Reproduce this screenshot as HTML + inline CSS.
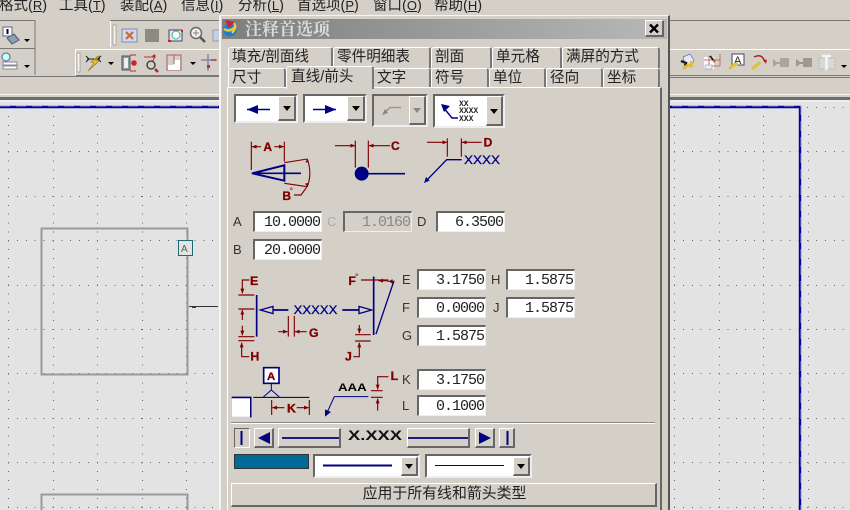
<!DOCTYPE html>
<html><head><meta charset="utf-8">
<style>
html,body{margin:0;padding:0;background:#d4d0c8}
#r{position:relative;width:850px;height:510px;overflow:hidden;background:#d4d0c8;font-family:"Liberation Sans","Noto Sans CJK SC",sans-serif;color:#111}
#r div{position:absolute;box-sizing:border-box}
.m{top:-3px;font-size:14.5px;line-height:18px;white-space:nowrap;color:#222}
.m u{font-size:13px}
.tab{background:#d4d0c8;border-top:1px solid #fff;border-left:1px solid #fff;border-right:2px solid #777;border-radius:3px 3px 0 0;font-size:14.6px;line-height:18px;padding-left:3px;white-space:nowrap;color:#222}
.f{background:#fff;border-top:2px solid #666;border-left:2px solid #666;border-right:1px solid #eee;border-bottom:1px solid #eee;font:15px/19px "Liberation Mono",monospace;letter-spacing:-1px;text-align:right;color:#222;padding-right:1px}
.f.d{background:#d4d0c8;color:#888}
.l{font-size:13px;line-height:16px;color:#333}
.cb{background:#fff;border-top:2px solid #666;border-left:2px solid #666;border-right:2px solid #eee;border-bottom:2px solid #eee}
.cb.d{background:#d4d0c8}
.dd{background:#d4d0c8;border-top:1px solid #fff;border-left:1px solid #fff;border-right:2px solid #666;border-bottom:2px solid #666}
.dd:after{content:"";position:absolute;left:50%;top:50%;margin:-2px 0 0 -4px;border:4px solid transparent;border-top:5px solid #000;border-bottom:0}
.dd.g:after{border-top-color:#888}
.b{background:#d4d0c8;border-top:1px solid #fff;border-left:1px solid #fff;border-right:2px solid #666;border-bottom:2px solid #666}
</style></head><body>
<div id="r">
<svg style="position:absolute;left:0;top:0" width="850" height="510">
<rect x="0" y="94" width="850" height="1" fill="#f4f3f0"/>
<rect x="0" y="97" width="850" height="3" fill="#6e6e6e"/>
<rect x="0" y="100" width="850" height="410" fill="#e3e3e3"/>
<rect x="0" y="100" width="850" height="2" fill="#ececec"/>
<g stroke="#5c6490" stroke-width="1" stroke-dasharray="1 7.88" shape-rendering="crispEdges">
<path d="M8 151.500H850M8 196.500H850M8 240.500H850M8 285.500H850M8 329.500H850M8 373.500H850M8 418.500H850M8 462.500H850M8 507.500H850M807 107.500H850"/>
<path d="M8.500 116V510M53.500 116V510M97.500 116V510M142.500 116V510M186.500 116V510M674.500 116V510M719.500 116V510M763.500 116V510M808.500 116V510"/>
</g>
<path d="M0 107H800V510" fill="none" stroke="#0000a8" stroke-width="2.400"/>
<path d="M0 106H801V510" fill="none" stroke="#9098c8" stroke-width="1" stroke-dasharray="10 6"/>
<rect x="41.500" y="228.500" width="146" height="146" fill="none" stroke="#999" stroke-width="2"/>
<rect x="41.500" y="494.500" width="146" height="40" fill="none" stroke="#999" stroke-width="2"/>
<rect x="178.500" y="240.500" width="14" height="15" fill="#e3e3e3" stroke="#1d6a70"/>
<text x="181" y="252" font-size="10" fill="#4a6a3a" font-family="Liberation Sans">A</text>
<path d="M189 306.500H218" stroke="#333"/><path d="M192 307.500H196" stroke="#333"/>

<!-- toolbars -->
<path d="M0 20.500H35V48.500M0 48.500H35V75" fill="none" stroke="#777"/>
<path d="M0 76.500H220" stroke="#777"/>
<path d="M110.500 21V47M75.500 49.500H220M75.500 49V75" fill="none" stroke="#fff"/>
<path d="M110 20.500H220" stroke="#777"/>
<path d="M76 75.500H220M669 20.500H850M669 75.500H850M669 77.500H850" stroke="#777"/>
<path d="M669 49.500H850" stroke="#fff"/>
<rect x="113" y="25" width="3" height="20" fill="#f4f3f0" stroke="#888" stroke-width=".6"/>
<rect x="77" y="53" width="3" height="19" fill="#f4f3f0" stroke="#888" stroke-width=".6"/>
<!-- left toolbar icons -->
<rect x="3" y="27" width="9" height="9" fill="#fff" stroke="#668"/><rect x="6.500" y="29" width="2" height="5" fill="#004"/>
<path d="M7 38L14 34L19 40L12 44Z" fill="#88a0b8" stroke="#556"/>
<path d="M24 39h6l-3 3z" fill="#000"/>
<circle cx="6" cy="57" r="4" fill="#cfe" stroke="#46a"/>
<path d="M3 62h14v4h-14zM3 65h14v4h-14z" fill="#fff" stroke="#889"/>
<path d="M24 65h6l-3 3z" fill="#000"/>
<rect x="122" y="29" width="15" height="13" fill="#cdd8f2" stroke="#88a"/><path d="M126 32l7 7M133 32l-7 7" stroke="#d06a20" stroke-width="2.200"/>
<rect x="145" y="29" width="14" height="13" fill="#8d8a7e"/>
<rect x="169" y="30" width="13" height="11" fill="#dfe9fb" stroke="#446"/><circle cx="176" cy="35" r="4" fill="#fff" stroke="#4a8"/><path d="M168 41h3M182 30v2" stroke="#d02020" stroke-width="2"/>
<circle cx="196" cy="33" r="5.500" fill="#eee" stroke="#666" stroke-width="1.400"/><path d="M200 37l5 5" stroke="#555" stroke-width="2.500"/><path d="M193 33h6M196 30v6" stroke="#888"/>
<rect x="213" y="30" width="7" height="11" fill="#c5d0e8" stroke="#99a"/>
<!-- second row -->
<path d="M86 56l3 3-3 3M101 56l-3 3 3 3M87 59H100" stroke="#222" fill="none"/><path d="M98 56l-7 6 3 1-6 8 11-10-4-1 5-4z" fill="#e8c830" stroke="#887020" stroke-width=".6"/>
<path d="M108 62h6l-3 3z" fill="#000"/>
<path d="M122 56h8v14h-8z" fill="#8a9aa0" stroke="#555"/><path d="M124 58h4v10h-4z" fill="#eee"/><circle cx="134" cy="63" r="2.800" fill="#d02030"/><path d="M130 55h6M130 71h6" stroke="#d02030"/>
<path d="M144 57H155L152 62" fill="none" stroke="#c03030"/><circle cx="151" cy="65" r="4" fill="none" stroke="#333" stroke-width="1.300"/><path d="M155 69l3 3M153 57l2-2" stroke="#c02030" stroke-width="2.500"/>
<rect x="167" y="55" width="14" height="15" fill="#d4d0c8" stroke="#b06060"/><path d="M168 65h6v-5h6v10h-12z" fill="#fff"/><path d="M174 55v9" stroke="#b06060"/>
<path d="M190 62h6l-3 3z" fill="#000"/>
<path d="M201 60H217" stroke="#8884a8" stroke-width="1.500"/><path d="M208 54V71" stroke="#8884a8" stroke-width="1.500"/><rect x="207" y="65" width="3" height="3" fill="#c03030"/><path d="M211 60h5" stroke="#c04040" stroke-width="1.500"/>
<!-- right toolbar icons -->
<path d="M683 57l7-3 4 6-2 5-7-1z" fill="#e4e8f8" stroke="#66a" stroke-width=".7"/><path d="M681 61l5 2-1 3" fill="none" stroke="#222" stroke-width="2.400"/><path d="M683 69l5-4 3 1 1-3-2-1" fill="none" stroke="#e0c030" stroke-width="3"/>
<rect x="704" y="57" width="10" height="12" fill="#fff"/><path d="M709 56V69M704 60H720M720 54V66M709 66H720" stroke="#c07070"/><path d="M710 56l5 6" stroke="#222" stroke-width="1.800"/><path d="M713 60l2 2" stroke="#d06020" stroke-width="2"/><rect x="705" y="65" width="7" height="4" fill="#eee" stroke="#999" stroke-width=".6"/>
<rect x="732" y="54" width="12" height="11" fill="#fff" stroke="#446"/><text x="734" y="64" font-size="11" fill="#222" font-family="Liberation Sans">A</text><path d="M729 69l6-5h3" fill="none" stroke="#e0c030" stroke-width="3"/>
<path d="M752 69l6-5 2-2" fill="none" stroke="#e0c030" stroke-width="3"/><path d="M754 57q6-3 9 1l2 4" fill="none" stroke="#a82020" stroke-width="1.500"/><path d="M763 59l4 1-1 4z" fill="#c02020"/>
<path d="M773 59l4 3h3v-4h9v9h-9v-3h-3l-4 3z" fill="#a8a69c"/>
<path d="M796 59l4 3h3v-4h9v9h-9v-3h-3l-4 3z" fill="#9c9a8c"/>
<rect x="819" y="58" width="16" height="11" fill="#d8d8d8" stroke="#aaa" stroke-dasharray="1 1"/><path d="M822 56h9M826.500 56v14" stroke="#f4f4f4" stroke-width="2.500"/>
<path d="M841 65h6l-3 3z" fill="#000"/>
</svg>

<!-- menu -->
<div class="m" style="left:-1px">格式(<u>R</u>)</div>
<div class="m" style="left:59px">工具(<u>T</u>)</div>
<div class="m" style="left:120px">装配(<u>A</u>)</div>
<div class="m" style="left:181px">信息(<u>I</u>)</div>
<div class="m" style="left:238px">分析(<u>L</u>)</div>
<div class="m" style="left:297px">首选项(<u>P</u>)</div>
<div class="m" style="left:373px">窗口(<u>O</u>)</div>
<div class="m" style="left:434px">帮助(<u>H</u>)</div>

<!-- dialog -->
<div style="left:219px;top:15px;width:451px;height:495px;background:#d4d0c8;border-top:1px solid #f4f4f4;border-left:2px solid #f4f4f4;border-right:2px solid #555"></div>
<div style="left:222px;top:19px;width:445px;height:20px;background:linear-gradient(90deg,#7e7e7e,#b8b8b8)"></div>
<svg style="position:absolute;left:222px;top:19px" width="20" height="20">
<ellipse cx="8" cy="11" rx="6.500" ry="6.500" fill="#1680d0"/><path d="M2 10q6 4 12-3" stroke="#e8c830" stroke-width="2.500" fill="none"/><path d="M3 1L13 3L7 9Z" fill="#d02040"/><path d="M12 4q3 5-2 10" stroke="#f0d040" stroke-width="2" fill="none"/>
</svg>
<div style="left:245px;top:20px;font-size:17px;line-height:19px;font-weight:700;color:#dcdcdc;font-family:'Liberation Serif','Noto Serif CJK SC',serif;white-space:nowrap">注释首选项</div>
<div class="b" style="left:645px;top:20px;width:19px;height:17px"></div>
<svg style="position:absolute;left:645px;top:20px" width="19" height="17"><path d="M5 4.500L13 12.500M13 4.500L5 12.500" stroke="#000" stroke-width="2.400"/></svg>

<!-- tabs -->
<div class="tab" style="left:228px;top:47px;width:105px;height:21px">填充/剖面线</div>
<div class="tab" style="left:333px;top:47px;width:98px;height:21px">零件明细表</div>
<div class="tab" style="left:431px;top:47px;width:61px;height:21px">剖面</div>
<div class="tab" style="left:492px;top:47px;width:70px;height:21px">单元格</div>
<div class="tab" style="left:562px;top:47px;width:98px;height:21px">满屏的方式</div>
<div style="left:227px;top:87px;width:435px;height:423px;background:#d4d0c8;border-top:1px solid #fff;border-left:1px solid #fff;border-right:2px solid #666"></div>
<div class="tab" style="left:228px;top:68px;width:58px;height:19px">尺寸</div>
<div class="tab" style="left:373px;top:68px;width:58px;height:19px">文字</div>
<div class="tab" style="left:431px;top:68px;width:58px;height:19px">符号</div>
<div class="tab" style="left:489px;top:68px;width:57px;height:19px">单位</div>
<div class="tab" style="left:546px;top:68px;width:57px;height:19px">径向</div>
<div class="tab" style="left:603px;top:68px;width:57px;height:19px">坐标</div>
<div class="tab" style="left:286px;top:66px;width:88px;height:23px;line-height:20px;padding-left:4px;z-index:2">直线/前头</div>

<!-- combos -->
<div class="cb" style="left:234px;top:94px;width:64px;height:29px"></div><div class="dd" style="left:278px;top:96px;width:18px;height:25px"></div>
<div class="cb" style="left:303px;top:94px;width:64px;height:29px"></div><div class="dd" style="left:347px;top:96px;width:18px;height:25px"></div>
<div class="cb d" style="left:372px;top:94px;width:56px;height:33px"></div><div class="dd g" style="left:409px;top:96px;width:17px;height:29px"></div>
<div class="cb" style="left:433px;top:94px;width:72px;height:34px"></div><div class="dd" style="left:486px;top:96px;width:17px;height:30px"></div>

<!-- fields -->
<div class="l" style="left:233px;top:214px">A</div>
<div class="f" style="left:253px;top:211px;width:69px;height:21px">10.0000</div>
<div class="l" style="left:327px;top:214px;color:#aaa">C</div>
<div class="f d" style="left:343px;top:211px;width:69px;height:21px">1.0160</div>
<div class="l" style="left:417px;top:214px">D</div>
<div class="f" style="left:436px;top:211px;width:69px;height:21px">6.3500</div>
<div class="l" style="left:233px;top:242px">B</div>
<div class="f" style="left:253px;top:239px;width:69px;height:21px">20.0000</div>
<div class="l" style="left:402px;top:272px">E</div>
<div class="f" style="left:417px;top:269px;width:69px;height:21px">3.1750</div>
<div class="l" style="left:491px;top:272px">H</div>
<div class="f" style="left:506px;top:269px;width:69px;height:21px">1.5875</div>
<div class="l" style="left:402px;top:300px">F</div>
<div class="f" style="left:417px;top:297px;width:69px;height:21px">0.0000</div>
<div class="l" style="left:493px;top:300px">J</div>
<div class="f" style="left:506px;top:297px;width:69px;height:21px">1.5875</div>
<div class="l" style="left:402px;top:328px">G</div>
<div class="f" style="left:417px;top:325px;width:69px;height:21px">1.5875</div>
<div class="l" style="left:402px;top:372px">K</div>
<div class="f" style="left:417px;top:369px;width:69px;height:21px">3.1750</div>
<div class="l" style="left:402px;top:398px">L</div>
<div class="f" style="left:417px;top:395px;width:69px;height:21px">0.1000</div>

<!-- bottom controls -->
<div style="left:231px;top:422px;width:424px;height:2px;background:#888;border-bottom:1px solid #fff"></div>
<div class="b" style="left:234px;top:428px;width:16px;height:20px;border:1px solid;border-color:#666 #fff #fff #666"></div>
<div class="b" style="left:254px;top:428px;width:20px;height:20px"></div>
<div class="b" style="left:278px;top:428px;width:63px;height:20px"></div>
<div class="b" style="left:407px;top:428px;width:63px;height:20px"></div>
<div class="b" style="left:475px;top:428px;width:20px;height:20px"></div>
<div class="b" style="left:499px;top:428px;width:16px;height:20px"></div>
<div style="left:234px;top:454px;width:75px;height:15px;background:#006a9a;border:1px solid #333"></div>
<div class="cb" style="left:313px;top:454px;width:107px;height:24px"></div><div class="dd" style="left:401px;top:457px;width:17px;height:19px"></div>
<div class="cb" style="left:425px;top:454px;width:107px;height:24px"></div><div class="dd" style="left:513px;top:457px;width:17px;height:19px"></div>
<div class="b" style="left:231px;top:483px;width:426px;height:24px;text-align:center;font-size:14.9px;line-height:21px;color:#222;padding-left:2px">应用于所有线和箭头类型</div>

<svg style="position:absolute;left:0;top:0;z-index:3;pointer-events:none" width="850" height="510">
<defs>
<marker id="a" markerUnits="userSpaceOnUse" markerWidth="16" markerHeight="14" refX="14" refY="7" orient="auto"><path d="M0 1L15 7L0 13Z" fill="#800000"/></marker>
</defs>
<!-- combo contents -->
<path d="M247 109.500H270" stroke="#000080" stroke-width="1.400"/><path d="M247 109.500l11-4.500v9z" fill="#000080"/>
<path d="M313 109.500H336" stroke="#000080" stroke-width="1.400"/><path d="M336 109.500l-11-4.500v9z" fill="#000080"/>
<path d="M383 114L390 107.500H401" fill="none" stroke="#999" stroke-width="1.600"/><path d="M382 115l3-6 3 4z" fill="#888"/>
<path d="M443 107L452 118H458" fill="none" stroke="#000080" stroke-width="1.400"/><path d="M441 104l9 2-6 6z" fill="#000080"/>
<g font-size="8" font-weight="700" fill="#222" font-family="Liberation Mono">
<text x="459" y="106">XX</text>
<text x="459" y="113">XXXX</text>
<text x="459" y="121">XXX</text>
</g>

<!-- upper diagrams, zoom coords -->
<g transform="translate(225,90) scale(.33333)" fill="none" font-family="Liberation Sans" font-weight="700">
<g stroke="#800000" stroke-width="3.400">
<path d="M79 155V240M178 155V215M391 152V233M430 152V233M667 145V200M709 145V200"/>
<path d="M108 170H81" marker-end="url(#a)"/><path d="M148 170H176" marker-end="url(#a)"/>
<path d="M330 167H390" marker-end="url(#a)"/><path d="M495 167H432" marker-end="url(#a)"/>
<path d="M606 157H666" marker-end="url(#a)"/><path d="M770 157H711" marker-end="url(#a)"/>
<path d="M178 218L247 207M178 280L247 290"/>
<path d="M247 207Q262 250 247 290"/>
<path d="M207 315H228L245 292"/>
</g>
<path d="M247 207l-6 10 10 0zM247 290l-7-9 10-2z" fill="#800000"/>
<g fill="#800000" stroke="#800000" stroke-width="1" font-size="36">
<text x="115" y="183">A</text>
<text x="172" y="330">B</text>
<text x="498" y="180">C</text>
<text x="776" y="170">D</text>
</g>
<text x="193" y="312" font-size="28" fill="#800000" font-weight="400">°</text>
<g stroke="#000080">
<path d="M82 250L178 226V272Z" stroke-width="6"/>
<path d="M80 250H228" stroke-width="5"/>
<path d="M430 251H540" stroke-width="5"/>
<path d="M710 209H665L604 272" stroke-width="4"/>
</g>
<path d="M597 279l6-18 11 11z" fill="#000080"/>
<circle cx="410" cy="251" r="21" fill="#000080"/>
<text x="717" y="222" font-size="36" fill="#000080" stroke="#000080" stroke-width=".8" font-weight="400" textLength="108" lengthAdjust="spacingAndGlyphs">XXXX</text>
</g>

<!-- lower diagrams -->
<g transform="translate(225,260) scale(.33333)" fill="none" font-family="Liberation Sans" font-weight="700">
<g stroke="#800000" stroke-width="3.400">
<path d="M73 60H52V100" marker-end="url(#a)"/>
<path d="M40 105H88M40 147H88M40 230H88M40 242H88"/>
<path d="M52 180V150" marker-end="url(#a)"/>
<path d="M52 197V226" marker-end="url(#a)"/>
<path d="M73 290H50V248" marker-end="url(#a)"/>
<path d="M190 168V230M208 168V230"/>
<path d="M160 215H188" marker-end="url(#a)"/>
<path d="M245 215H210" marker-end="url(#a)"/>
<path d="M408 60H490"/>
<path d="M480 62H460" marker-end="url(#a)"/>
<path d="M480 62Q498 62 505 72" marker-end="url(#a)"/>
<path d="M403 195V220" marker-end="url(#a)"/>
<path d="M390 224H437M390 243H437"/>
<path d="M385 290H403V248" marker-end="url(#a)"/>
<path d="M140 420V465M253 420V465"/>
<path d="M178 443H142" marker-end="url(#a)"/>
<path d="M215 443H251" marker-end="url(#a)"/>
<path d="M490 350H458V388" marker-end="url(#a)"/>
<path d="M438 392H473M438 412H473"/>
<path d="M458 452V416" marker-end="url(#a)"/>
</g>
<g stroke="#000080">
<path d="M95 105V230M446 50V225" stroke-width="5"/>
<path d="M453 222L507 62" stroke-width="4"/>
<path d="M190 150H130M352 150H405" stroke-width="5"/>
<path d="M106 150L144 139V161Z" stroke-width="4" fill="#d4d0c8"/>
<path d="M440 150L402 139V161Z" stroke-width="4" fill="#d4d0c8"/>
<rect x="116" y="323" width="46" height="47" stroke-width="5" fill="#fff"/>
<path d="M139 370V390M139 390L115 411M139 390L163 411" stroke-width="3"/>
<path d="M430 410H328L307 456" stroke-width="3"/>
</g>
<path d="M300 470l0-22 18 8z" fill="#000080"/>
<path d="M85 412H253" stroke="#000" stroke-width="3"/>
<path d="M20 412.500H77V472" stroke="#000080" stroke-width="5"/>
<rect x="21" y="415" width="54" height="55" fill="#fff"/>
<g fill="#800000" stroke="#800000" stroke-width="1" font-size="37">
<text x="75" y="75">E</text>
<text x="76" y="302">H</text>
<text x="252" y="231">G</text>
<text x="370" y="75">F</text>
<text x="360" y="302">J</text>
<text x="186" y="457">K</text>
<text x="497" y="360">L</text>
<text x="126" y="360" font-size="34">A</text>
</g>
<text x="390" y="60" font-size="28" font-weight="400" fill="#800000">°</text>
<text x="206" y="162" font-size="36" fill="#000080" stroke="#000080" stroke-width=".8" font-weight="400" textLength="131" lengthAdjust="spacingAndGlyphs">XXXXX</text>
<text x="339" y="393" font-size="34" fill="#000" textLength="86" lengthAdjust="spacingAndGlyphs">AAA</text>
</g>

<!-- bottom strip icons -->
<path d="M241.500 431V445M507.500 431V445" stroke="#000080" stroke-width="2"/>
<path d="M258 438l12-6v12z" fill="#000080"/>
<path d="M491 438l-12-6v12z" fill="#000080"/>
<path d="M282 438H339M408 438H468" stroke="#000080" stroke-width="1.800"/>
<text x="348" y="440" font-size="14" font-weight="700" fill="#111" font-family="Liberation Sans" textLength="54" lengthAdjust="spacingAndGlyphs">X.XXX</text>
<path d="M323 465.500H392" stroke="#000080" stroke-width="2"/>
<path d="M435 465.500H504" stroke="#000080" stroke-width="1"/>
</svg>
</div>
</body></html>
